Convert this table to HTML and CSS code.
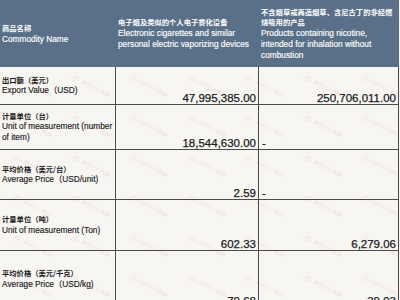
FILE: index.html
```html
<!DOCTYPE html>
<html lang="zh">
<head>
    <meta charset="UTF-8">
    <meta name="viewport" content="width=device-width, initial-scale=1.0">
    <title>Export Statistics</title>
    <link rel="stylesheet" href="styles.css">
</head>
<body>
    <div class="sheet">
        <!-- Column headers -->
        <div class="head">
            <div class="hcell">
                <div class="cn">商品名称</div>
                <div class="en">Commodity Name</div>
            </div>
            <div class="hcell">
                <div class="cn">电子烟及类似的个人电子雾化设备</div>
                <div class="en">Electronic cigarettes and similar personal electric vaporizing devices</div>
            </div>
            <div class="hcell">
                <div class="cn">不含烟草或再造烟草、含尼古丁的非经燃烧吸用的产品</div>
                <div class="en">Products containing nicotine, intended for inhalation without combustion</div>
            </div>
        </div>

        <!-- Data rows -->
        <div class="body">
            <svg class="watermark" width="100%" height="100%">
                <defs>
                    <pattern id="wm" patternUnits="userSpaceOnUse" width="58" height="40">
                        <path d="M13 13 C15 9 19 9 21 11 M14 15 C16 12 19 12 21 14" fill="none" stroke="#efdcd8" stroke-width="0.9"/>
                        <text x="0" y="0" transform="translate(23 16) rotate(28)" font-size="5.5" fill="#f0dedb" font-family="Liberation Sans, Noto Sans CJK SC, sans-serif">2FIRST 两岸</text>
                    </pattern>
                </defs>
                <rect width="100%" height="100%" fill="url(#wm)"/>
            </svg>

            <div class="row r1">
                <div class="label">
                    <div class="cn">出口额（美元）</div>
                    <div class="en">Export Value（USD)</div>
                </div>
                <div class="num">47,995,385.00</div>
                <div class="num">250,706,011.00</div>
            </div>
            <div class="row r2">
                <div class="label">
                    <div class="cn">计量单位（台）</div>
                    <div class="en">Unit of measurement (number of item)</div>
                </div>
                <div class="num">18,544,630.00</div>
                <div class="num dash">-</div>
            </div>
            <div class="row r3">
                <div class="label">
                    <div class="cn">平均价格（美元/台）</div>
                    <div class="en">Average Price（USD/unit)</div>
                </div>
                <div class="num">2.59</div>
                <div class="num dash">-</div>
            </div>
            <div class="row r4">
                <div class="label">
                    <div class="cn">计量单位（吨）</div>
                    <div class="en">Unit of measurement (Ton)</div>
                </div>
                <div class="num">602.33</div>
                <div class="num">6,279.06</div>
            </div>
            <div class="row r5">
                <div class="label">
                    <div class="cn">平均价格（美元/千克）</div>
                    <div class="en">Average Price（USD/kg)</div>
                </div>
                <div class="num">79.68</div>
                <div class="num">39.93</div>
            </div>
        </div>
    </div>
</body>
</html>
```

FILE: styles.css
```css
* {
    margin: 0;
    padding: 0;
    box-sizing: border-box;
}

body {
    font-family: "Liberation Sans", "Noto Sans CJK SC", sans-serif;
    background-color: #f8f6f3;
    color: #1a1a1a;
    width: 400px;
    height: 300px;
    overflow: hidden;
}

.sheet {
    width: 399px;
}

.head {
    display: grid;
    grid-template-columns: 116px 143px 140px;
    height: 67px;
    background: #5a7089;
    color: #fff;
}

.hcell {
    display: flex;
    flex-direction: column;
    justify-content: center;
    padding: 0 2px;
}

.cn {
    font-family: "Noto Sans CJK SC", sans-serif;
    font-size: 7.3px;
    line-height: 10.7px;
    font-weight: 700;
}

.en {
    font-size: 8.3px;
    line-height: 10.7px;
    -webkit-text-stroke: 0.15px currentColor;
}

.body {
    position: relative;
}

.watermark {
    position: absolute;
    top: 0;
    left: 0;
    z-index: 0;
}

.row {
    position: relative;
    z-index: 1;
    display: grid;
    grid-template-columns: 116px 143px 140px;
    border-bottom: 1px solid #4a4a4a;
}

.r1 { height: 38px; }
.r2 { height: 45px; }
.r3 { height: 50px; }
.r4 { height: 51px; }
.r5 { height: 57px; }

.row > div {
    border-right: 1px solid #4a4a4a;
}

.label {
    display: flex;
    flex-direction: column;
    justify-content: center;
    padding: 0 2px;
}

.label .en {
    line-height: 11px;
}

.num {
    display: flex;
    align-items: flex-end;
    justify-content: flex-end;
    font-size: 11.5px;
    line-height: 12px;
    padding-right: 2px;
    -webkit-text-stroke: 0.25px currentColor;
}

.num.dash {
    justify-content: flex-start;
    padding-left: 3px;
}
```
